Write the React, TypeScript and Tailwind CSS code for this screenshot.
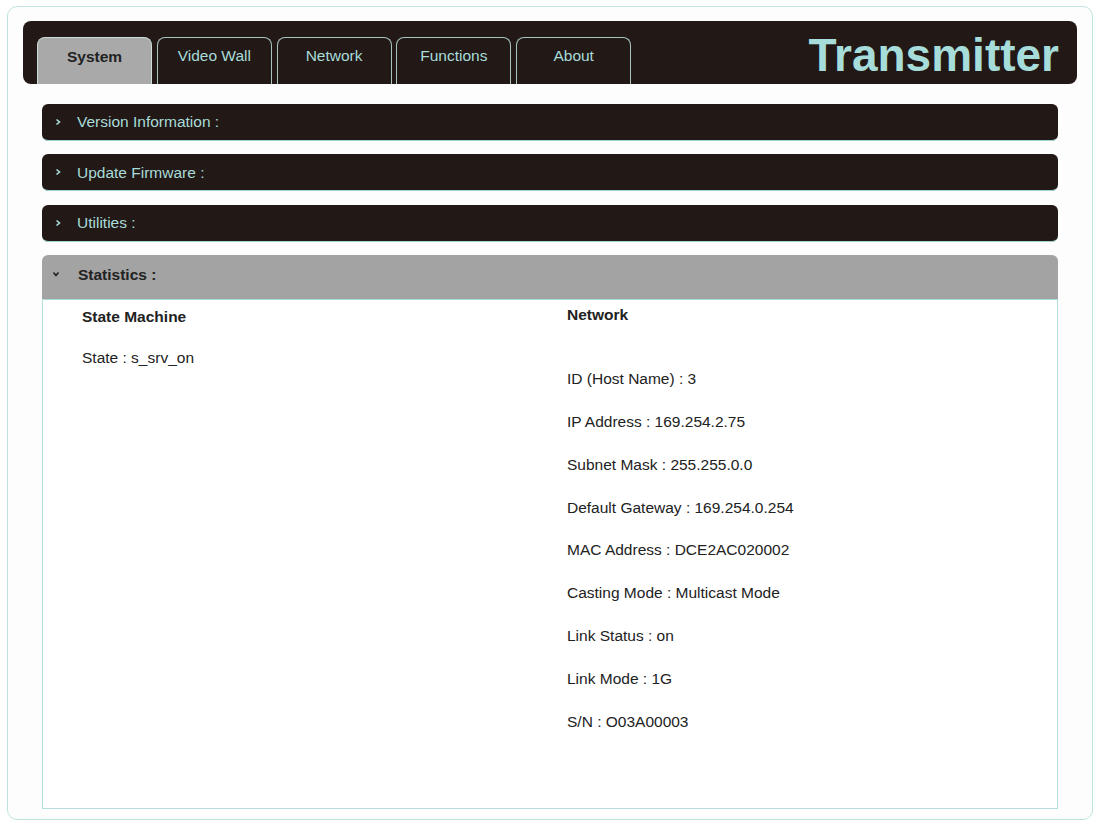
import React from 'react';

const tabs = ['System', 'Video Wall', 'Network', 'Functions', 'About'];

const networkRows = [
  'ID (Host Name) : 3',
  'IP Address : 169.254.2.75',
  'Subnet Mask : 255.255.0.0',
  'Default Gateway : 169.254.0.254',
  'MAC Address : DCE2AC020002',
  'Casting Mode : Multicast Mode',
  'Link Status : on',
  'Link Mode : 1G',
  'S/N : O03A00003',
];

function Chevron({ down = false }: { down?: boolean }) {
  return (
    <svg width="8" height="8" viewBox="0 0 8 8" className={down ? 'rotate-90' : ''}>
      <path d="M2.5 1.5 L5.5 4 L2.5 6.5" fill="none" stroke="currentColor" strokeWidth="1.6" />
    </svg>
  );
}

function ClosedSection({ title }: { title: string }) {
  return (
    <div className="h-[37px] rounded-[6px] bg-[#221816] border-b border-[#9fd4cf] flex items-center pl-[12px] gap-[15px] text-[#a8dcd9] text-[15.5px]">
      <Chevron />
      <span>{title}</span>
    </div>
  );
}

export default function App() {
  return (
    <div className="min-h-[827px] bg-white" style={{ fontFamily: '"Liberation Sans", Arial, sans-serif' }}>
      <div className="ml-[7px] pt-[6px]">
        <div className="w-[1086px] h-[814px] rounded-[10px] border border-[#bfe4e0] bg-[#fdfdfd] pt-[14px] px-[15px]">
          {/* header */}
          <div className="h-[63px] rounded-[8px] bg-[#221816] flex items-end justify-between pl-[14px] pr-[18px]">
            <div className="flex gap-[4.8px]">
              {tabs.map((t, i) => (
                <div
                  key={t}
                  className={
                    i === 0
                      ? 'w-[115px] h-[47px] rounded-t-[8px] bg-[#a9a9a9] border border-b-0 border-[#c9dcd9] flex items-start justify-center pt-[7px] text-[15.5px] font-bold text-[#222]'
                      : 'w-[115px] h-[47px] rounded-t-[8px] bg-[#221816] border border-b-0 border-[#a7c4bf] flex items-start justify-center pt-[6px] text-[15.5px] text-[#a8dcd9]'
                  }
                >
                  {t}
                </div>
              ))}
            </div>
            <div className="self-center text-[46px] leading-none font-bold text-[#a6dcda] pt-[4px]">Transmitter</div>
          </div>

          {/* sections */}
          <div className="mx-[19px] mt-[20px] flex flex-col gap-[13.4px]">
            <ClosedSection title="Version Information :" />
            <ClosedSection title="Update Firmware :" />
            <ClosedSection title="Utilities :" />

            <div className="flex flex-col">
              <div className="h-[45px] rounded-t-[6px] bg-[#a3a3a3] border-b border-[#a9dcd6] flex items-center pl-[10px] pb-[6px] gap-[18px] text-[15.5px] font-bold text-[#222]">
                <Chevron down />
                <span>Statistics :</span>
              </div>
              <div className="h-[509px] border border-t-0 border-[#b4e0db] bg-white flex text-[15.5px] text-[#222]">
                <div className="w-[524px] pl-[39px] pt-[7px]">
                  <div className="font-bold h-[20px] leading-[20px]">State Machine</div>
                  <div className="mt-[21px] leading-[20px]">State : s_srv_on</div>
                </div>
                <div className="pt-[5px]">
                  <div className="font-bold h-[20px] leading-[20px]">Network</div>
                  <div className="mt-[44px] flex flex-col gap-[22.8px]">
                    {networkRows.map((r) => (
                      <div key={r} className="leading-[20px]">{r}</div>
                    ))}
                  </div>
                </div>
              </div>
            </div>
          </div>
        </div>
      </div>
    </div>
  );
}
